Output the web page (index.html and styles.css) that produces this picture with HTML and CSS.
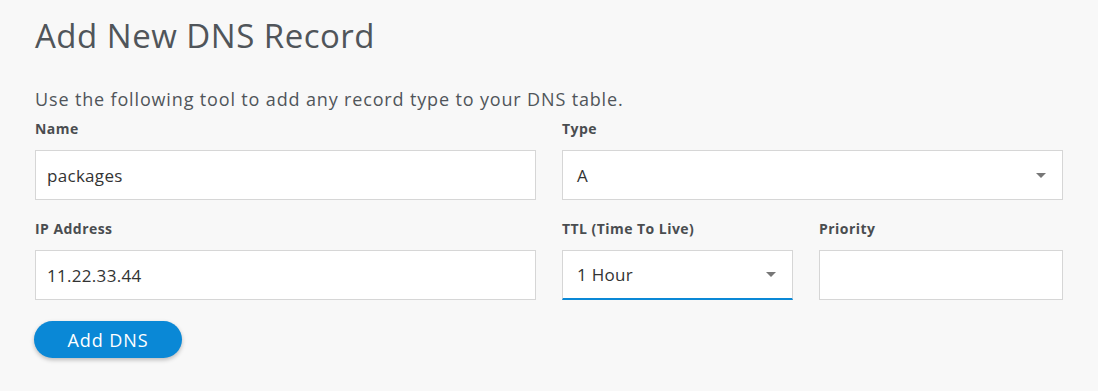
FILE: index.html
```html
<!DOCTYPE html>
<html lang="en">
<head>
    <meta charset="UTF-8">
    <title>Add New DNS Record</title>
    <link rel="stylesheet" href="styles.css">
</head>
<body>
    <div class="panel">
        <h2 class="panel-title">Add New DNS Record</h2>
        <p class="panel-intro">Use the following tool to add any record type to your DNS table.</p>

        <form class="dns-form">
            <div class="form-row">
                <div class="field">
                    <label for="name">Name</label>
                    <div class="control">packages</div>
                </div>
                <div class="field">
                    <label for="type">Type</label>
                    <div class="control select">
                        <span>A</span>
                        <span class="caret"></span>
                    </div>
                </div>
            </div>
            <div class="form-row">
                <div class="field">
                    <label for="ip">IP Address</label>
                    <div class="control">11.22.33.44</div>
                </div>
                <div class="field split">
                    <div class="field ttl">
                        <label for="ttl">TTL (Time To Live)</label>
                        <div class="control select focused">
                            <span>1 Hour</span>
                            <span class="caret"></span>
                        </div>
                    </div>
                    <div class="field priority">
                        <label for="priority">Priority</label>
                        <div class="control"></div>
                    </div>
                </div>
            </div>
            <div class="actions">
                <button type="button" class="btn-primary">Add DNS</button>
            </div>
        </form>
    </div>
</body>
</html>
```

FILE: styles.css
```css
*, *::before, *::after {
    box-sizing: border-box;
}

html, body {
    margin: 0;
    height: 100%;
}
body {
    background: #f8f8f8;
    font-family: "Open Sans", "DejaVu Sans", sans-serif;
    color: #555;
}
.panel {
    padding: 13px 35px 0 35px;
    width: 1063px;
    box-sizing: content-box;
}
.panel-title {
    margin: 0;
    font-size: 33px;
    font-weight: 400;
    color: #50555a;
    line-height: 46px;
    letter-spacing: 0.5px;
}
.panel-intro {
    margin: 28px 0 0 0;
    font-size: 18px;
    line-height: 24px;
    color: #50555a;
    letter-spacing: 0.85px;
}
.dns-form {
    margin-top: 7px;
}
.form-row {
    display: grid;
    grid-template-columns: 501px 501px;
    column-gap: 26px;
    margin-bottom: 18px;
}
.field {
    display: flex;
    flex-direction: column;
}
.field label {
    font-size: 14px;
    font-weight: 700;
    color: #4a4d50;
    line-height: 21px;
    margin-bottom: 11px;
    letter-spacing: 0.45px;
}
.field.split {
    flex-direction: row;
    gap: 26px;
}
.field.ttl {
    flex: 0 0 231px;
}
.field.priority {
    flex: 1;
}
.control {
    height: 50px;
    background: #fff;
    border: 1px solid #d6d6d6;
    display: flex;
    align-items: center;
    justify-content: space-between;
    padding: 0 11px;
    font-size: 17px;
    color: #333;
    letter-spacing: 0.3px;
}
.control.select {
    padding: 0 16px 0 14px;
}
.control.focused {
    border-bottom: 2px solid #0a88d6;
}
.caret {
    width: 0;
    height: 0;
    border-left: 5px solid transparent;
    border-right: 5px solid transparent;
    border-top: 5px solid #777;
}
.actions {
    margin-top: 21px;
}
.btn-primary {
    width: 148px;
    height: 37px;
    margin-left: -1px;
    border: none;
    border-radius: 19px;
    background: #0a88d6;
    color: #fff;
    font-family: inherit;
    font-size: 18px;
    letter-spacing: 0.9px;
    box-shadow: 0 2px 4px rgba(0, 0, 0, 0.25);
    cursor: pointer;
}
```
